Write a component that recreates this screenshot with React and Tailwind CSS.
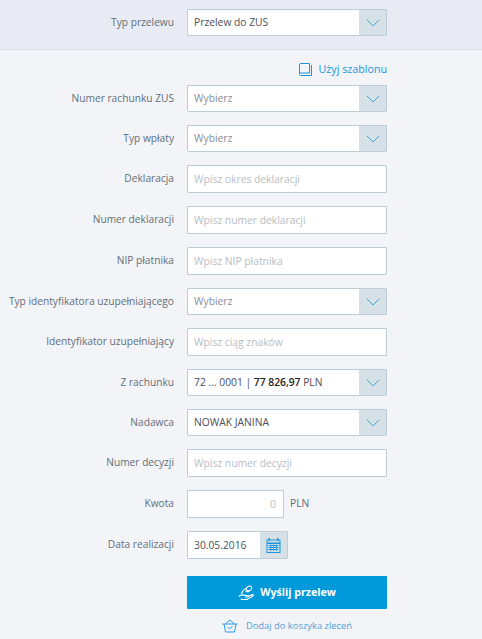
import { ChevronDown } from 'lucide-react';

function Label({ children }) {
    return (
        <div className="w-[174px] shrink-0 whitespace-nowrap text-right text-[10.2px] leading-[16px] text-[#636e78] -translate-y-[1px]">
            {children}
        </div>
    );
}

function Select({ children, muted }) {
    return (
        <div className="flex h-[27px] w-[200px] border border-[#bccdd8] bg-white rounded-[1px] box-border">
            <div className={`flex-1 pl-[6px] text-[10.3px] leading-[25px] whitespace-nowrap ${muted ? 'text-[#8a8f94]' : 'text-[#4a5058]'}`}>
                {children}
            </div>
            <div className="flex w-[27px] items-center justify-center bg-[#d5e0e7]">
                <ChevronDown size={24} strokeWidth={0.9} className="text-[#2a9fe6]" />
            </div>
        </div>
    );
}

function TextInput({ placeholder }) {
    return (
        <div className="h-[28px] w-[200px] border border-[#bccdd8] bg-white pl-[6px] text-[10.3px] leading-[26px] text-[#b9bec3] rounded-[1px] box-border">
            {placeholder}
        </div>
    );
}

function Row({ label, children, className }) {
    return (
        <div className={`flex items-center gap-[13px] ${className}`}>
            <Label>{label}</Label>
            {children}
        </div>
    );
}

function BookIcon() {
    return (
        <svg width="13" height="13" viewBox="0 0 13 13" fill="none" stroke="#1a96d8" strokeWidth="1">
            <path d="M0.5 11V1.5C0.5 0.9 0.9 0.5 1.5 0.5H10.5V10H1.5C0.9 10 0.5 10.4 0.5 11C0.5 11.8 0.9 12.5 1.5 12.5H12.5V2" />
        </svg>
    );
}

function CalendarIcon() {
    return (
        <svg width="15" height="15" viewBox="0 0 15 15" fill="#1a96e0">
            <rect x="2.5" y="0" width="1.5" height="3" />
            <rect x="11" y="0" width="1.5" height="3" />
            <path d="M0.5 1.5H14.5V15H0.5V1.5ZM1.5 2.5V4.5H13.5V2.5H1.5ZM1.5 6V14H13.5V6H1.5Z" />
            <path d="M2.5 7H12.5V8H2.5ZM2.5 9H12.5V10H2.5ZM2.5 11H12.5V12H2.5Z" />
            <path d="M4.5 6.5H5.2V13H4.5ZM7.2 6.5H7.9V13H7.2ZM9.9 6.5H10.6V13H9.9Z" />
        </svg>
    );
}

function HandIcon() {
    return (
        <svg width="16" height="16" viewBox="0 0 16 16" fill="none" stroke="#fff" strokeWidth="1.1">
            <ellipse cx="11" cy="3.4" rx="2.8" ry="2.2" transform="rotate(-25 11 3.4)" />
            <path d="M8 3.5C6.5 4 5.5 5 4.5 6.5L3.5 9" />
            <path d="M7.5 6C8.5 7 10 7 11.5 6.2" />
            <path d="M0.8 11.5C3 9.5 5 9.5 7 10.5H10C10.8 10.5 10.8 12 10 12H7" />
            <path d="M10 11.2L15 9.5C15.6 10.2 15.2 10.8 14.8 11L9 14.5H5L2.5 14" />
        </svg>
    );
}

function BasketIcon() {
    return (
        <svg width="16" height="14" viewBox="0 0 16 14" fill="none" stroke="#2a9fe6" strokeWidth="1">
            <path d="M0.5 5H15.5" />
            <path d="M2 5L3.5 13H12.5L14 5" />
            <path d="M3.5 5L8 1L12.5 5" />
            <path d="M5.5 8L7.5 10L10.5 7" />
        </svg>
    );
}

export default function App() {
    return (
        <div className="h-[639px] w-[482px] overflow-hidden bg-[#f2f4f8] font-['Open_Sans',sans-serif]">
            <div className="flex h-[50px] items-start border-b border-[#d9dce5] bg-[#e8ebf3] pt-[9px]">
                <Row label="Typ przelewu">
                    <Select>Przelew do ZUS</Select>
                </Row>
            </div>

            <div className="flex h-[35px] items-start justify-end gap-[7px] pr-[95px] pt-[13px]">
                <BookIcon />
                <span className="text-[10.7px] leading-[13px] text-[#1a96d8]">Użyj szablonu</span>
            </div>

            <div className="flex flex-col">
                <Row label="Numer rachunku ZUS"><Select muted>Wybierz</Select></Row>
                <Row label="Typ wpłaty" className="mt-[13px]"><Select muted>Wybierz</Select></Row>
                <Row label="Deklaracja" className="mt-[13px]"><TextInput placeholder="Wpisz okres deklaracji" /></Row>
                <Row label="Numer deklaracji" className="mt-[13px]"><TextInput placeholder="Wpisz numer deklaracji" /></Row>
                <Row label="NIP płatnika" className="mt-[13px]"><TextInput placeholder="Wpisz NIP płatnika" /></Row>
                <Row label="Typ identyfikatora uzupełniającego" className="mt-[13px]"><Select muted>Wybierz</Select></Row>
                <Row label="Identyfikator uzupełniający" className="mt-[13px]"><TextInput placeholder="Wpisz ciąg znaków" /></Row>
                <Row label="Z rachunku" className="mt-[13px]">
                    <Select>
                        72 ... 0001 | <span className="font-semibold text-[#222]">77 826,97</span> PLN
                    </Select>
                </Row>
                <Row label="Nadawca" className="mt-[13px]"><Select>NOWAK JANINA</Select></Row>
                <Row label="Numer decyzji" className="mt-[13px]"><TextInput placeholder="Wpisz numer decyzji" /></Row>
                <Row label="Kwota" className="mt-[13px]">
                    <div className="h-[28px] w-[97px] border border-[#bccdd8] bg-white pr-[7px] text-right text-[10.3px] leading-[26px] text-[#b9bec3] box-border rounded-[1px]">
                        0
                    </div>
                    <span className="-ml-[7px] text-[10.3px] text-[#636e78]">PLN</span>
                </Row>
                <Row label="Data realizacji" className="mt-[13px]">
                    <div className="flex h-[28px] w-[101px] border border-[#bccdd8] bg-white box-border rounded-[1px]">
                        <div className="flex-1 pl-[6px] text-[10.3px] leading-[26px] text-[#4a5058]">30.05.2016</div>
                        <div className="flex w-[27px] items-center justify-center bg-[#d5e0e7]">
                            <CalendarIcon />
                        </div>
                    </div>
                </Row>
                <div className="ml-[187px] mt-[17px] flex h-[33px] w-[200px] items-center justify-center gap-[6px] bg-[#0099da] rounded-[1px]">
                    <HandIcon />
                    <span className="text-[10.6px] font-bold text-white">Wyślij przelew</span>
                </div>
                <div className="ml-[187px] mt-[10px] flex w-[200px] items-center justify-center gap-[8px]">
                    <BasketIcon />
                    <span className="text-[9.4px] font-medium text-[#5a9fd8]">Dodaj do koszyka zleceń</span>
                </div>
            </div>
        </div>
    );
}
